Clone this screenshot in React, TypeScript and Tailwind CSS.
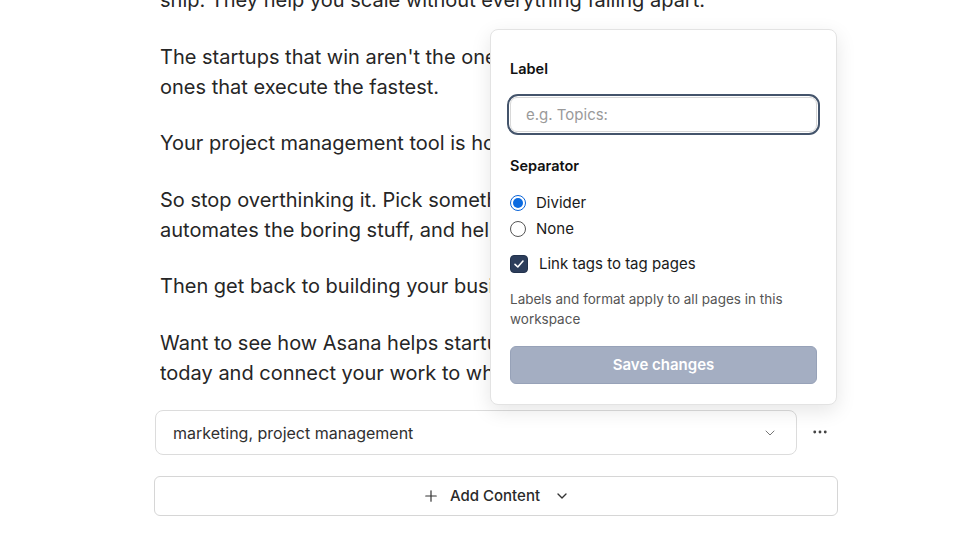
import React, { useState } from 'react';
import { ChevronDown, Plus, MoreHorizontal } from 'lucide-react';

const paragraphs: string[][] = [
  ['ship. They help you scale without everything falling apart.'],
  [
    "The startups that win aren't the ones with the best process. They're the",
    'ones that execute the fastest.',
  ],
  ['Your project management tool is how you get there, or what holds you back.'],
  [
    'So stop overthinking it. Pick something your team will actually use, that',
    'automates the boring stuff, and helps everyone see what matters.',
  ],
  ['Then get back to building your business.'],
  [
    'Want to see how Asana helps startups move faster? Start your free trial',
    'today and connect your work to what matters most.',
  ],
];

const Radio = ({ checked, label, onClick }: { checked: boolean; label: string; onClick: () => void }) => (
  <div className="flex items-center gap-[10px] h-5 cursor-pointer" onClick={onClick}>
    {checked ? (
      <span className="w-[16px] h-[16px] rounded-full border-[1.5px] border-[#0a64d8] flex items-center justify-center">
        <span className="w-[10px] h-[10px] rounded-full bg-[#0a6ae0]"></span>
      </span>
    ) : (
      <span className="w-[16px] h-[16px] rounded-full border-[1.5px] border-[#555]"></span>
    )}
    <span className="text-[15px] text-[#1a1a1a]">{label}</span>
  </div>
);

const App = () => {
  const [separator, setSeparator] = useState<'divider' | 'none'>('divider');
  const [linkTags, setLinkTags] = useState(true);

  return (
    <div className="h-[541px] w-[960px] overflow-hidden bg-white font-['Inter',sans-serif]">
      <div className="relative w-[684px] ml-[154px] mt-[-15px]">
        <div className="px-[6px] text-[20px] leading-[30px] text-[#262626] flex flex-col gap-[26.5px]">
          {paragraphs.map((lines, i) => (
            <p key={i} className="whitespace-nowrap overflow-hidden">
              {lines.map((line, j) => (
                <React.Fragment key={j}>
                  {line}
                  {j < lines.length - 1 && <br />}
                </React.Fragment>
              ))}
            </p>
          ))}
        </div>

        <div className="mt-[22.5px] flex items-center">
          <div className="flex-1 h-[45px] mr-[41px] ml-[1px] rounded-[8px] border border-[#dcdcdc] flex items-center justify-between pl-[17px] pr-[18px]">
            <span className="text-[16px] text-[#303030]">marketing, project management</span>
            <ChevronDown size={16} strokeWidth={1.5} className="text-[#777]" />
          </div>
        </div>
        <div className="absolute right-[9px] top-[438px]">
          <MoreHorizontal size={18} strokeWidth={1.8} className="text-[#444]" />
        </div>

        <div className="mt-[21px] h-[40px] rounded-[6px] border border-[#d6d6d6] flex items-center justify-center gap-[10px]">
          <Plus size={18} strokeWidth={1.6} className="text-[#333]" />
          <span className="text-[15px] font-medium text-[#2a2a2a]">Add Content</span>
          <ChevronDown size={16} strokeWidth={2} className="text-[#333] ml-[4px]" />
        </div>

        <div className="absolute left-[336px] top-[44px] w-[347px] rounded-[8px] border border-[#e3e3e3] bg-white shadow-[0_6px_20px_rgba(0,0,0,0.10)] px-[19px] pt-[29px] pb-[20px]">
          <div className="text-[14.5px] leading-5 font-semibold text-[#111]">Label</div>
          <div className="mt-[18px] rounded-[8px] outline-2 outline-offset-1 outline-[#44546b] outline-solid">
            <input
              placeholder="e.g. Topics:"
              className="block w-full h-[35px] rounded-[7px] border border-[#d8d8d8] px-[15px] text-[15px] text-[#222] placeholder:text-[#9a9a9a] outline-none"
            />
          </div>
          <div className="mt-[24px] text-[14.5px] leading-5 font-semibold text-[#111]">Separator</div>
          <div className="mt-[17px] flex flex-col gap-[6px]">
            <Radio checked={separator === 'divider'} label="Divider" onClick={() => setSeparator('divider')} />
            <Radio checked={separator === 'none'} label="None" onClick={() => setSeparator('none')} />
          </div>
          <div className="mt-[15px] flex items-center gap-[11px] h-5 cursor-pointer" onClick={() => setLinkTags(!linkTags)}>
            <span
              className={`w-[18px] h-[18px] rounded-[4px] flex items-center justify-center border ${
                linkTags ? 'bg-[#2c3d5b] border-[#22324d]' : 'bg-white border-[#888]'
              }`}
            >
              {linkTags && (
                <svg width="12" height="12" viewBox="0 0 12 12" fill="none">
                  <path d="M2 6.3 L4.8 9 L10 3" stroke="white" strokeWidth="1.6" strokeLinecap="round" strokeLinejoin="round" />
                </svg>
              )}
            </span>
            <span className="text-[15px] text-[#1a1a1a]">Link tags to tag pages</span>
          </div>
          <p className="mt-[15px] text-[13.5px] leading-5 text-[#555]">
            Labels and format apply to all pages in this
            <br />
            workspace
          </p>
          <button className="mt-[17px] w-full h-[38px] rounded-[6px] bg-[#a4aec2] border border-[#97a2b8] text-[15px] font-semibold text-white">
            Save changes
          </button>
        </div>
      </div>
    </div>
  );
};

export default App;
